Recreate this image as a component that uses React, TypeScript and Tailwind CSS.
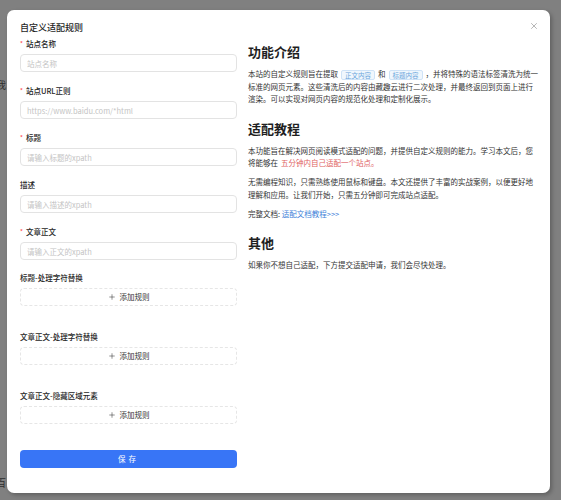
import { Plus, X } from "lucide-react";

const font = { fontFamily: '"Noto Sans CJK SC", "Noto Sans", sans-serif' };

function Label({ text, required }: { text: string; required?: boolean }) {
  return (
    <div className="flex h-[10px] items-center text-[7.5px] font-medium leading-[10px] text-[#262626]">
      {required && <span className="mr-[3px] text-[6px] text-[#ff4d4f]">*</span>}
      <span>{text}</span>
    </div>
  );
}

function TextInput({ placeholder }: { placeholder: string }) {
  return (
    <input
      readOnly
      placeholder={placeholder}
      className="mt-[5px] block h-[18px] w-full rounded-[4px] border border-[#e3e3e3] bg-white px-[6px] text-[7.5px] outline-none placeholder:text-[#c4c4c4]"
    />
  );
}

function Field({ label, placeholder, required }: { label: string; placeholder: string; required?: boolean }) {
  return (
    <div className="mb-[14px]">
      <Label text={label} required={required} />
      <TextInput placeholder={placeholder} />
    </div>
  );
}

function RuleBlock({ label }: { label: string }) {
  return (
    <div className="mb-[26px]">
      <Label text={label} />
      <button className="mt-[5px] flex h-[18px] w-full items-center justify-center gap-[4px] rounded-[4px] border border-dashed border-[#e6e6e6] bg-white text-[7.5px] text-[#333]">
        <Plus size={8} strokeWidth={1.6} />
        <span>添加规则</span>
      </button>
    </div>
  );
}

function Tag({ children }: { children: string }) {
  return (
    <span className="mx-[3px] inline-block rounded-[2px] border border-[#cfe3f7] bg-[#f0f7fd] px-[3px] align-middle text-[6.5px] leading-[8px] text-[#6aa5dc]">
      {children}
    </span>
  );
}

export default function App() {
  return (
    <div className="relative h-[500px] w-[561px] overflow-hidden bg-[#808080] pl-[7px] pt-[10px]" style={font}>
      <span className="absolute left-[-4px] top-[77px] text-[10px] text-[#2e2e2e]">我</span>
      <span className="absolute left-[-4px] top-[475px] text-[10px] text-[#2e2e2e]">百</span>

      <div className="relative z-10 flex h-[483px] w-[543px] rounded-[7px] bg-white pl-[13px] pt-[12px] shadow-[2px_2px_4px_rgba(0,0,0,0.25)]">
        <button className="absolute right-[11px] top-[11px] text-[#777]">
          <X size={10} strokeWidth={1.3} />
        </button>

        <div className="w-[217px]">
          <div className="mb-[5px] h-[12px] text-[9px] font-medium leading-[12px] text-[#1f1f1f]">自定义适配规则</div>
          <Field label="站点名称" placeholder="站点名称" required />
          <Field label="站点URL正则" placeholder="https://www.baidu.com/*html" required />
          <Field label="标题" placeholder="请输入标题的xpath" required />
          <Field label="描述" placeholder="请输入描述的xpath" />
          <div className="mb-[13px]">
            <Label text="文章正文" required />
            <TextInput placeholder="请输入正文的xpath" />
          </div>
          <RuleBlock label="标题-处理字符替换" />
          <RuleBlock label="文章正文-处理字符替换" />
          <RuleBlock label="文章正文-隐藏区域元素" />
          <button className="mt-[1px] block h-[18px] w-full rounded-[4px] bg-[#3875f6] text-[7.5px] tracking-[3px] text-white">
            保存
          </button>
        </div>

        <div className="ml-[11px] w-[292px] pt-[21px] text-[7.5px] leading-[12.5px] text-[#333]">
          <h2 className="mb-[7px] text-[13px] font-semibold leading-[18px] text-[#1f1f1f]">功能介绍</h2>
          <p>
            本站的自定义规则旨在提取<Tag>正文内容</Tag>和<Tag>标题内容</Tag>，并将特殊的语法标签清洗为统一标准的网页元素。这些清洗后的内容由藏趣云进行二次处理，并最终返回到页面上进行渲染。可以实现对网页内容的规范化处理和定制化展示。
          </p>

          <h2 className="mb-[7px] mt-[14px] text-[13px] font-semibold leading-[18px] text-[#1f1f1f]">适配教程</h2>
          <p className="mb-[6.5px]">
            本功能旨在解决网页阅读模式适配的问题，并提供自定义规则的能力。学习本文后，您将能够在
            <span className="ml-[3px] text-[#e0625f]">五分钟内自己适配一个站点。</span>
          </p>
          <p className="mb-[6.5px]">
            无需编程知识，只需熟练使用鼠标和键盘。本文还提供了丰富的实战案例，以便更好地理解和应用。让我们开始，只需五分钟即可完成站点适配。
          </p>
          <p>
            完整文档: <span className="text-[#3d7fd9]">适配文档教程&gt;&gt;&gt;</span>
          </p>

          <h2 className="mb-[7px] mt-[14px] text-[13px] font-semibold leading-[18px] text-[#1f1f1f]">其他</h2>
          <p>如果你不想自己适配，下方提交适配申请，我们会尽快处理。</p>
        </div>
      </div>
    </div>
  );
}
